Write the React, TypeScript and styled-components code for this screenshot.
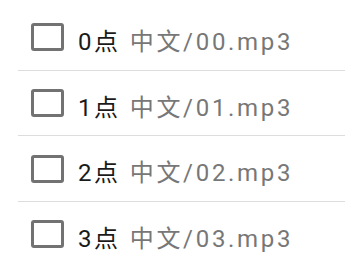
import styled, { createGlobalStyle } from 'styled-components';

const GlobalStyle = createGlobalStyle`
  html, body {
    margin: 0;
    padding: 0;
    background: #ffffff;
    font-family: Roboto, "Noto Sans CJK SC", sans-serif;
    overflow: hidden;
  }
`;

const List = styled.ul`
  list-style: none;
  margin: 0;
  padding: 5px 0 0 0;
`;

const Row = styled.li`
  display: flex;
  align-items: center;
  height: 64.7px;
  margin-left: 18px;
  padding-left: 13px;
  border-bottom: 1px solid #dddddd;
`;

const Box = styled.span`
  flex-shrink: 0;
  box-sizing: border-box;
  width: 33px;
  height: 28px;
  border: 3px solid #727272;
  border-radius: 3px;
  background: #fff;
`;

const Hour = styled.span`
  margin-left: 14px;
  font-size: 24px;
  letter-spacing: 2.6px;
  color: #1a1a1a;
  padding-top: 4px;
`;

const File = styled.span`
  margin-left: 9px;
  font-size: 24px;
  letter-spacing: 2.7px;
  color: #777777;
  padding-top: 4px;
`;

const items = [0, 1, 2, 3].map(n => ({
  hour: `${n}点`,
  file: `中文/${String(n).padStart(2, '0')}.mp3`,
}));

export default function App() {
  return (
    <>
      <GlobalStyle />
      <List>
        {items.map(item => (
          <Row key={item.hour}>
            <Box />
            <Hour>{item.hour}</Hour>
            <File>{item.file}</File>
          </Row>
        ))}
      </List>
    </>
  );
}
